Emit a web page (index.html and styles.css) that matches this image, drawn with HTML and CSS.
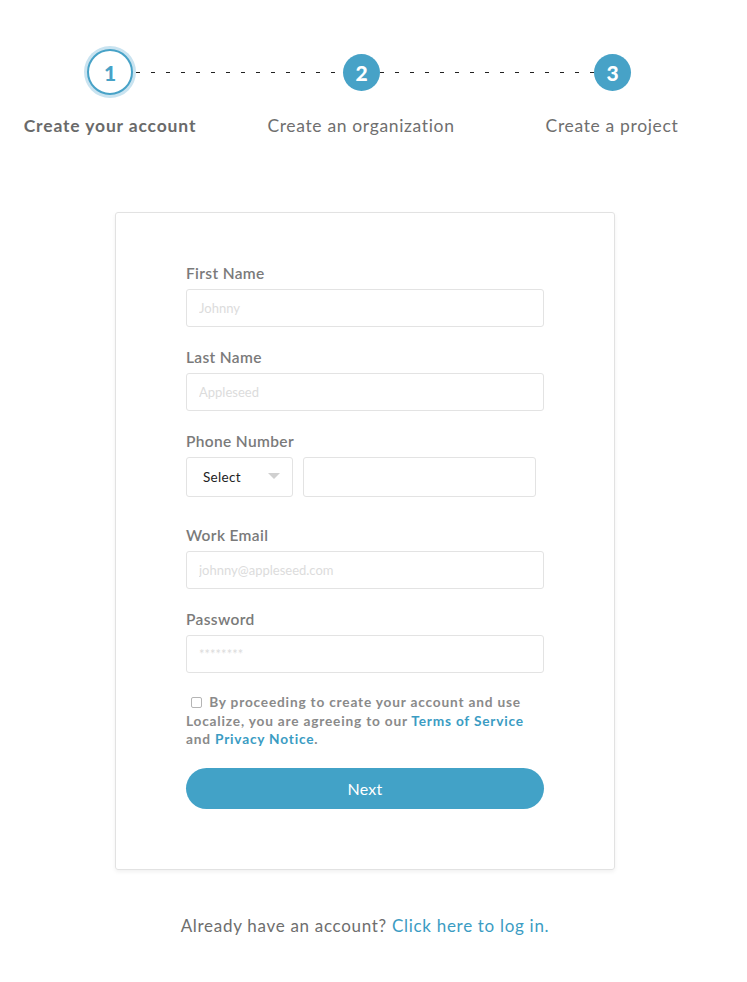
FILE: index.html
```html
<!DOCTYPE html>
<html>
<head>
<meta charset="utf-8">
<link rel="stylesheet" href="styles.css">
</head>
<body>
<div class="page">
  <div class="steps">
    <div class="circles">
      <div class="circle active">1</div>
      <div class="dash dash-1"></div>
      <div class="circle">2</div>
      <div class="dash dash-2"></div>
      <div class="circle">3</div>
    </div>
    <div class="labels">
      <div class="label current">Create your account</div>
      <div class="label">Create an organization</div>
      <div class="label">Create a project</div>
    </div>
  </div>

  <div class="card">
    <div class="field">
      <label class="field-label">First Name</label>
      <input class="input" type="text" placeholder="Johnny">
    </div>
    <div class="field">
      <label class="field-label">Last Name</label>
      <input class="input" type="text" placeholder="Appleseed">
    </div>
    <div class="field field-phone">
      <label class="field-label">Phone Number</label>
      <div class="phone-row">
        <div class="select">Select<span class="caret"></span></div>
        <input class="input phone" type="text">
      </div>
    </div>
    <div class="field">
      <label class="field-label">Work Email</label>
      <input class="input" type="text" placeholder="johnny@appleseed.com">
    </div>
    <div class="field">
      <label class="field-label">Password</label>
      <input class="input" type="text" placeholder="********">
    </div>
    <p class="agree"><span class="checkbox"></span> By proceeding to create your account and use Localize, you are agreeing to our <a class="link">Terms of Service</a> and <a class="link">Privacy Notice</a>.</p>
    <button class="next">Next</button>
  </div>

  <p class="footer">Already have an account? <a class="footer-link">Click here to log in.</a></p>
</div>
</body>
</html>
```

FILE: styles.css
```css
* { box-sizing: border-box; }
html, body { margin: 0; padding: 0; background: #fff; }
body { font-family: Lato, "Noto Sans", sans-serif; color: #666; }
.page { width: 747px; padding-top: 47px; }

.steps { display: flex; flex-direction: column; }
.circles { display: flex; align-items: center; margin-left: 85px; height: 50px; }
.circle {
  width: 37px; height: 37px; border-radius: 50%;
  background: #47a2c7; color: #fff;
  display: flex; align-items: center; justify-content: center;
  font-weight: 900; font-size: 21px; flex: none;
}
.circle.active {
  background: #fff; color: #47a2c7;
  border: 2px solid #47a2c7;
  box-shadow: 0 0 0 3px #c9e3f0;
  width: 46px; height: 46px; margin: 0 2px;
}
.dash {
  height: 1px;
  background: repeating-linear-gradient(to right, #222 0 4px, transparent 4px 15px);
  flex: none;
}
.dash-1 { width: 207px; margin-left: 1px; }
.dash-2 { width: 214px; }

.labels { display: flex; gap: 51px; margin-left: 10px; margin-top: 18px; }
.label { width: 200px; text-align: center; font-size: 17.5px; color: #6f6f6f; white-space: nowrap; letter-spacing: 0.65px; }
.label.current { font-weight: 700; color: #6a6a6a; letter-spacing: 0.85px; }

.card {
  width: 500px; margin: 76px 0 0 115px;
  border: 1px solid #e2e2e2; border-radius: 3px;
  box-shadow: 0 2px 4px rgba(0,0,0,0.06);
  padding: 50px 70px 60px 70px;
}
.field { display: flex; flex-direction: column; margin-bottom: 20px; }
.field-label { font-size: 15.5px; font-weight: 600; color: #7a7a7a; line-height: 20px; margin-bottom: 6px; letter-spacing: 0.35px; }
.input {
  width: 358px; height: 38px;
  border: 1px solid #e3e3e3; border-radius: 3px;
  padding: 0 12px; font-family: inherit; font-size: 13px; color: #444;
  outline: none; background: #fff;
}
.input::placeholder { color: #dcdcdc; }
.field-phone { margin-bottom: 28px; }
.phone-row { display: flex; gap: 10px; }
.select {
  width: 107px; height: 40px;
  border: 1px solid #e3e3e3; border-radius: 3px;
  display: flex; align-items: center; padding-left: 16px;
  font-size: 13.5px; color: #222; position: relative; letter-spacing: 0.3px;
}
.caret {
  position: absolute; right: 12px; top: 15px;
  width: 0; height: 0;
  border-left: 6px solid transparent; border-right: 6px solid transparent;
  border-top: 6px solid #d0d0d0;
}
.input.phone { width: 233px; height: 40px; }

.agree {
  margin: 4px 0 0 0; font-size: 13.7px; line-height: 18.5px;
  font-weight: 700; color: #8a8a8a; letter-spacing: 0.8px;
}
.checkbox {
  display: inline-block; width: 11px; height: 11px;
  border: 1px solid #b5b5b5; border-radius: 2px;
  vertical-align: -1px; margin: 0 3px 0 5px;
}
.link { color: #3b9cc3; text-decoration: none; }
.next {
  display: block; width: 358px; height: 41px; margin-top: 19px;
  border: none; border-radius: 21px; background: #42a2c7; color: #fff;
  font-family: inherit; font-size: 16px; letter-spacing: 0.3px;
}

.footer { width: 500px; margin: 45px 0 0 115px; text-align: center; font-size: 17px; color: #6e6e6e; letter-spacing: 0.7px; }
.footer-link { color: #3b9cc3; }
```
